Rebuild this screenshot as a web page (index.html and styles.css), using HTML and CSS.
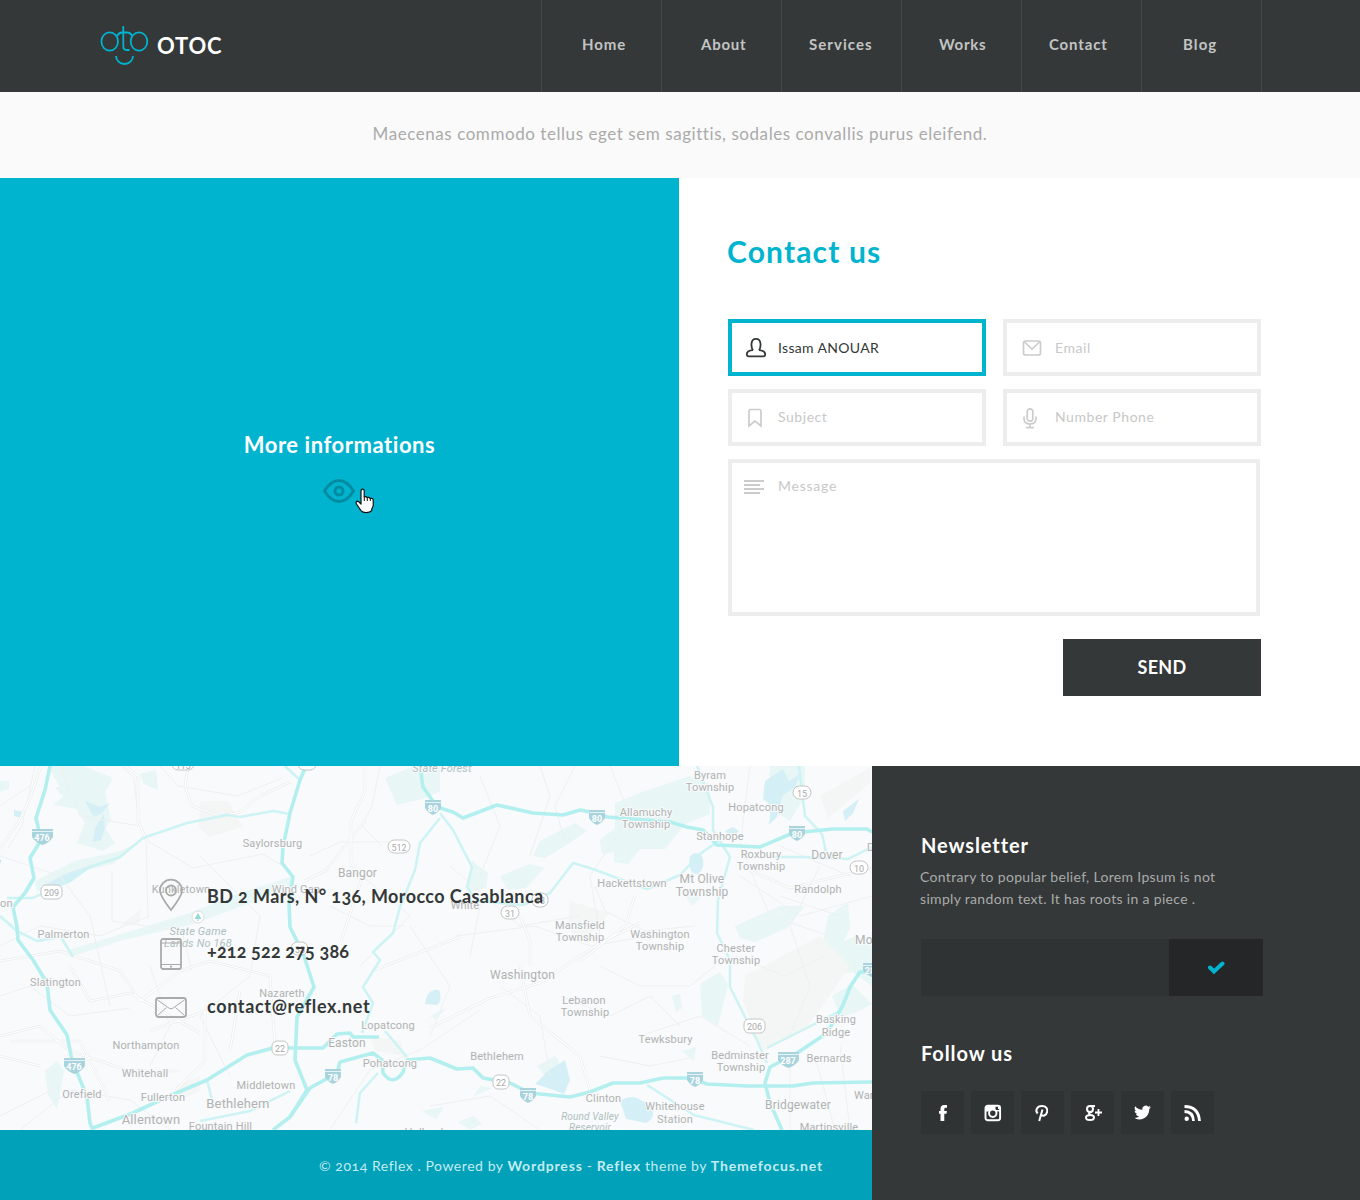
FILE: index.html
```html
<!DOCTYPE html>
<html lang="en">
<head>
<meta charset="utf-8">
<title>OTOC - Contact</title>
<link rel="stylesheet" href="styles.css">
</head>
<body>
<header class="header">
  <a class="logo">
    <svg class="logo-mark" width="50" height="42" viewBox="0 0 50 42" fill="none" stroke="#00b4cf" stroke-width="1.8">
      <ellipse cx="9.700" cy="16.500" rx="8.300" ry="9.200"/><ellipse cx="39" cy="16.500" rx="8.300" ry="9.200"/>
      <path d="M16.500 11.500Q19 7.500 22 7.500h5q3.500 0 5.500 4M23.300 1v20.500q0 3.500 3 3.500h3.200M16 31a8.500 8 0 0 0 17 0"/>
    </svg>
    <span class="logo-name">OTOC</span>
  </a>
  <nav class="nav">
    <a class="nav-item home">Home</a><a class="nav-item about">About</a><a class="nav-item services">Services</a><a class="nav-item works">Works</a><a class="nav-item reach">Contact</a><a class="nav-item blog">Blog</a>
  </nav>
</header>
<p class="tagline">Maecenas commodo tellus eget sem sagittis, sodales convallis purus eleifend.</p>

<main class="main">
  <section class="more">
    <h2 class="more-title">More informations</h2>
    <div class="eye">
      <svg width="34" height="26" viewBox="0 0 34 26" fill="none" stroke="#008ba1" stroke-width="3"><path d="M2.500 13Q9 2.500 17 2.500T31.500 13Q25 23.500 17 23.500T2.500 13z" stroke-linejoin="round"/><circle cx="17" cy="13" r="4"/></svg>
      <svg class="cursor" width="20" height="26" viewBox="0 0 20 26"><path d="M6 14V3q0-1.800 1.600-1.800T9.200 3v6q2-1 3 .6 2-.8 3 .8 2.800-.6 3 1.800v5.500l-1.500 3.500v1.500q-2 2-5.500 2-3.700 0-5.200-2L1.500 16q-1-2.200.5-2.800Q3.500 13 6 16z" fill="#fff" stroke="#111" stroke-width="1.200" stroke-linejoin="round"/><path d="M9.300 8.500V13M12.300 9.600V13M15.300 10.400V13" stroke="#111"/></svg>
    </div>
  </section>
  <section class="contact">
    <h1 class="contact-title">Contact us</h1>
    <form class="form">
      <div class="field active">
        <svg class="ico" width="22" height="22" viewBox="0 0 22 22" fill="none" stroke="#343838" stroke-width="1.800"><path d="M8 13.200C6.300 11 6.300 8 6.600 6 7 3 8.800 1.800 11 1.800S15 3 15.400 6c.3 2 .3 5-1.400 7.200M8 13.200c-3.500.3-6.200 1.200-6.200 4 0 1.600.8 2.100 2 2.100h14.400c1.200 0 2-.5 2-2.100 0-2.800-2.700-3.700-6.200-4"/></svg>
        <span class="name-text">Issam ANOUAR</span></div>
      <div class="field right">
        <svg class="ico" width="22" height="22" viewBox="0 0 22 22" fill="none" stroke="#ccc" stroke-width="1.700"><rect x="2.500" y="4" width="17" height="14" rx="2"/><path d="M3.500 5l7.500 7 7.500-7"/></svg>
        <span>Email</span></div>
      <div class="field low">
        <svg class="ico" width="22" height="22" viewBox="0 0 22 22" fill="none" stroke="#ccc" stroke-width="1.700"><path d="M4 19V4q0-1.500 1.500-1.500h9Q16 2.500 16 4v15l-6-5z"/></svg>
        <span>Subject</span></div>
      <div class="field right low">
        <svg class="ico" width="22" height="22" viewBox="0 0 22 22" fill="none" stroke="#ccc" stroke-width="1.700"><rect x="6.200" y="1.800" width="5.600" height="12.400" rx="2.800"/><path d="M3 9.500v2q0 5.500 6 5.500t6-5.500v-2M9 17v3.500M5 20.700h8"/></svg>
        <span>Number Phone</span></div>
      <div class="field message">
        <svg class="ico" width="22" height="22" viewBox="0 0 22 22" fill="none" stroke="#ccc" stroke-width="1.800"><path d="M0 5h20M0 9h16M0 13h20M0 17h16"/></svg>
        <span>Message</span></div>
      <button class="send" type="button">SEND</button>
    </form>
  </section>
</main>

<div class="bottom">
  <div class="left">
    <section class="map">
      <svg class="map-art" width="872" height="364" viewBox="0 0 872 364">
        <g class="park">
          <path d="M48 0h35l30 12-8 14 6 28-6 8 10 15-12 8-26-8 8-20-8-14-24-4 10-8-8-10H60z"/>
          <path d="M35 115l40-20 45-10 15-7-22 20-36 8-20 15-20 5zM65 185l60-18 65-20 50-20 53-17v10l-40 16-60 22-70 16-50 16z"/>
          <path d="M385 12l30-12h25v25l-18 8-25 6zM645 25l45-15 20 8v30l-25 10-20 25-25 0-12 15-14-2 0-10-12 2-2-14 15-12 0-25z"/>
          <path d="M540 75l35-18 12 8-22 15-20 12-12-2zM500 110l30-12 14 4-18 20-18 2zM472 95l16 12-2 15-18 4z"/>
          <path d="M770 0h35v30l-15 25-22-14zM735 160l45-20h25l-18 22-32 14-15-4zM700 218l20-12 8 12-10 42-16-10zM835 180l20-10 17 10v40l-20-14-18 4zM45 305l12-10 7 10-7 38-9-14zM537 300l18-10 10 14-14 14zM832 230l20-12 20 20-15 8-16 5z"/>
          <path d="M430 250l16-8-10 12zM422 345l22-4-8 12zM458 356l16-6 8 8-12 6zM682 285l14-4-2 14zM680 122l22 8-10 10zM828 150l20-14 2 26-14 30-14-10zM480 320l12 2-18 8zM0 15h9v8l-9 3zM140 8l16-4 2 20-14-6zM672 230l8-2 2 14-6 4z"/>
        </g>
        <g class="gray"><path d="M200 35h28l15 26-34 10-10-10zM135 148l6-6-2 16-20 2zM175 320l25-10v15l-22 10zM745 210l75-40 30 30-42 60-45 25-20-50zM370 270l30 5 5 15-30-5zM820 30l50-28v15l-42 35zM570 135l40 12-28 30-14-16z"/></g>
        <g class="water">
          <path d="M85 35l15 6 10-4-8 10-8 4zM95 62l9-14 1 14-4 12-8 2zM43 120l22-12 30-10-24 18-20 8zM765 15l18-12 6 12 12-8-6 14-12 8-6 22-8 8 2-20-8-6zM691 105q-5-16 4-18 10 0 8 14-5 12-12 4zM425 238q2-16 14-14 4 10-2 15zM535 318l14-14 10-6 6-4 5 20-6 14-16-6zM620 335q12-8 22 0l10 4q4 14-6 18l-20-4zM755 258l6-5 4 5-8 6zM843 45l16-12-6 14-8 8zM725 65l8-4 6 4-8 8zM14 44l9 2-2 6-7-2z"/>
        </g>
        <g class="thin">
          <path d="M35 0L22 60 8 82M122 0l12 12 4 40 8 20 2 80M160 0l18 20 60 10 44-18M143 72l50 30 70-14 20 12M0 180l40-20 60 10 50-20M112 105v50l70 10 10 40M0 230l30-10 40 30 60-8M0 40l30-20M380 0l-8 40-10 20 20 20M310 90l30-14 50 0M330 140l40 20 35 0M455 170l80-10 55 20 60-10M470 190l10-50 40-30M575 0l-20 40 10 35M595 120l10 25 40 20 50-5M600 200l40 20 50 0 25-20M740 110l60 40 72-20M560 230l50 20 40-20 30 30M735 190l50 20 40-20M430 340l60-10 50 34M600 290l50 10 40-8M790 290v74M815 290l20 74M840 280l10 84M450 100l70 60 60-10M500 220l40 30 10 60M410 160l40 60-20 50"/>
          <path d="M0 90l60 20 30 40 20 90M60 0l20 50 60 10M200 90l60 60-10 60-50 40 30 60M150 200l20 60-20 40M20 364l50-40 60 10 40 30M0 350l60-30M610 0l20 50-40 60 10 60M780 80l70 30M780 130l60 20M750 0l-10 80 30 70 60 20M330 364l40-60 50-20 60-40M350 100l60 50-50 50M480 10l20 50-20 50M540 0l10 30-20 60M820 100l-30 60 20 60-20 50M640 270l60-20 50 30"/>
        </g>
        <g class="minor">
          <path id="lanes" d="M41 0l-10 30-12 25-19 28M125 0l13 10v45l9 20M188 0l-3 20 7 20 28 10 20-4 20-16 30-14M0 195l60-10 60 20 20 30 40-30 30-10 40 10M365 0v25l-14 30 0 40 10 20-20 60M365 55l-40 50-20 10M372 205l90-35M430 262l60-30 50-15 60-40 40-20M530 200v-25l-10-25M520 200l10 50 50 40 10 35 10 4M740 100l50 22 82-20M635 130l-10 30-45 35M0 270l40-10 30 25 60 20 50 0M70 200l20 35 40-8 70 40M150 265l55-20 0 50-30 30M110 335l-30-60-70 0M40 300l-40-10M230 200l40 10 5 70M240 225l-10 60"/>
        </g>
        <use href="#lanes" class="lane-core"/>
        <g class="road">
          <path d="M7 132h26l37-18 20-13 30-10 23-19 44-15 40-8 13 2 33-6 17 3M440 52l-20 25-5 27-15 37-7 26-20 19 7 8-17 27 10 16-11 30M440 47l13 17 19 37-5 20 10 14 46 4 27-12 23-30 17 5 57 21 33-14 20-21 20-14M697 0l16 41v23l17 27-12 43-1 33 13 27v27l15 30 12 23 10 23M799 0l6 50 17 18 5 22M767 91h36l45 2 24-12M0 150l17 15 20 10 24-4 12 20M285 0l15 14M385 265l22 26M767 282l30-15 43-22M647 319l47 30 60 15M207 314l5 20M200 355l50-10 40-20M378 307l-18 20-4 30"/>
        </g>
        <g class="highway">
          <path d="M50 0l-5 24-9 28 5 22-11 18 4 20-9 15-12 14 4 20 1 13 15 20 14 23 3 27 17 25 5 25 15 37 3 26 3 7M306 0l-6 14-10 33-7 34-1 16 11 14-4 26 1 24 13 26 11 34-17 30-2 43 12 30-17 27-17 13M420 0l3 21 14 20 16 5 10 6 34-13 36 8 30 2 17-5 10 2 17 5 63 5 17 5 16 3 14 15 43 2 33-14 40-4h34l5 3"/>
          <path d="M93 362l40-15 34-16 40-17 40-25 26-7h50l14-14 13-1 3 4h26M290 351l20-29 27-15 3-11 33-9 9 7 1 13q10 14 20-1l4-12 23-2 27 11 16-1 10 10 27 5 20 10 40 4 20-5 23-9h27l23-5h27l17 6 40 2h46l20-3 59-1M872 206h-12l-10 15-7 18-16 28-30 20-27 14-5 16 5 20 12 27"/>
        </g>
        <g class="shield">
          <path d="M32 63h21v8q-4 6-10.500 8Q36 77 32 71zM425 34h16v8q-3 5-8 7-5-2-8-7zM589 44h16v8q-3 5-8 7-5-2-8-7zM789 60h16v8q-3 5-8 7-5-2-8-7zM64 292h21v8q-4 6-10.500 8Q68 306 64 300zM325 303h16v8q-3 5-8 7-5-2-8-7zM520 322h16v8q-3 5-8 7-5-2-8-7zM687 306h16v8q-3 5-8 7-5-2-8-7zM778 286h21v8q-4 6-10.500 8Q782 300 778 294zM863 197h9v14q-6-2-9-7z"/>
          <path class="shield-line" d="M32 65.500h21M425 36.500h16M589 46.500h16M789 62.500h16M64 294.500h21M325 305.500h16M520 324.500h16M687 308.500h16M778 288.500h21M863 199.500h9"/>
        </g>
        <g class="badge">
          <rect x="172" y="-9" width="22" height="13" rx="6"/><rect x="298" y="-9" width="18" height="13" rx="6"/>
          <rect x="41" y="119" width="21" height="14" rx="5"/><rect x="388" y="74" width="22" height="13" rx="6.500"/><rect x="793" y="20" width="18" height="13" rx="6.500"/><rect x="850" y="95" width="18" height="13" rx="6.500"/><rect x="501" y="140" width="18" height="13" rx="6.500"/><rect x="532" y="127" width="16" height="14" rx="6.500"/><rect x="272" y="275" width="16" height="14" rx="5"/><rect x="493" y="309" width="16" height="14" rx="5"/><rect x="744" y="253" width="21" height="14" rx="5"/><rect x="291" y="176" width="17" height="13" rx="6.500"/>
        </g>
        <circle cx="198" cy="151" r="6" fill="#fff" stroke="#ddd"/><path d="M198 147l3.500 6h-7zM197.500 152h1v3h-1z" fill="#9ad8d6"/>
        <g class="num">
          <text x="51.500" y="130">209</text><text x="399" y="85">512</text><text x="802" y="31">15</text><text x="859" y="106">10</text><text x="510" y="151">31</text><text x="540" y="138">33</text><text x="280" y="286">22</text><text x="501" y="320">22</text><text x="754.500" y="264">206</text><text x="300" y="187">33</text><text x="183" y="3">115</text>
        </g>
        <g class="inter">
          <text x="42" y="74.500">476</text><text x="433" y="45.500">80</text><text x="597" y="55.500">80</text><text x="797" y="71.500">80</text><text x="74" y="303.500">476</text><text x="333" y="314.500">78</text><text x="528" y="333.500">78</text><text x="695" y="317.500">78</text><text x="788" y="297.500">287</text><text x="870" y="208">28</text>
        </g>
        <g class="place">
          <text x="272.500" y="81">Saylorsburg</text><text x="357.500" y="111" class="mid">Bangor</text><text x="181" y="127">Kunkletown</text><text x="296" y="127">Wind Gap</text><text x="465" y="143">White</text><text x="63.500" y="172">Palmerton</text><text x="55.500" y="220">Slatington</text><text x="282" y="231">Nazareth</text><text x="388" y="263">Lopatcong</text><text x="347" y="281" class="mid">Easton</text><text x="390" y="301">Pohatcong</text><text x="146" y="283">Northampton</text><text x="145" y="311">Whitehall</text><text x="82" y="332">Orefield</text><text x="163" y="335">Fullerton</text><text x="266" y="323">Middletown</text><text x="238" y="342" class="big">Bethlehem</text><text x="151" y="358" class="big">Allentown</text><text x="220.500" y="364">Fountain Hill</text><text x="497" y="294">Bethlehem</text><text x="522.500" y="213" class="mid">Washington</text>
          <text x="710" y="13">Byram</text><text x="710" y="25">Township</text><text x="756" y="45">Hopatcong</text><text x="646" y="50">Allamuchy</text><text x="646" y="62">Township</text><text x="720" y="74">Stanhope</text><text x="761" y="92">Roxbury</text><text x="761" y="104">Township</text><text x="827" y="93" class="mid">Dover</text><text x="632" y="121">Hackettstown</text><text x="702" y="117" class="mid">Mt Olive</text><text x="702" y="130" class="mid">Township</text><text x="818" y="127">Randolph</text><text x="580" y="163">Mansfield</text><text x="580" y="175">Township</text><text x="660" y="172">Washington</text><text x="660" y="184">Township</text><text x="736" y="186">Chester</text><text x="736" y="198">Township</text><text x="584" y="238">Lebanon</text><text x="585" y="250">Township</text><text x="665.500" y="277">Tewksbury</text><text x="740" y="293">Bedminster</text><text x="741" y="305">Township</text><text x="836" y="257">Basking</text><text x="836" y="270">Ridge</text><text x="829" y="296">Bernards</text><text x="603.500" y="336">Clinton</text><text x="675" y="344">Whitehouse</text><text x="675" y="357">Station</text><text x="798" y="343" class="mid">Bridgewater</text><text x="829" y="365">Martinsville</text><text x="424" y="370">Holland</text>
          <g class="edge"><text x="855" y="178" class="mid">Mo</text><text x="854" y="333">War</text><text x="867" y="85">D</text><text x="0" y="141">on</text><text x="-5" y="99">e</text></g>
          <g class="ital"><text x="198" y="169">State Game</text><text x="198" y="181">Lands No 168</text><text x="442" y="6">State Forest</text><text x="590" y="354" class="valley">Round Valley</text><text x="590" y="365" class="valley">Reservoir</text></g>
        </g>
      </svg>
      <ul class="details">
        <li class="detail address"><svg width="32" height="34" viewBox="0 0 32 34" fill="none" stroke="#aaa" stroke-width="1.800"><path d="M16 32Q5 18 5 12.500a11 10.800 0 0 1 22 0Q27 18 16 32z"/><circle cx="16" cy="12.500" r="5"/></svg><span>BD 2 Mars, N° 136, Morocco Casablanca</span></li>
        <li class="detail phone"><svg width="32" height="34" viewBox="0 0 32 34" fill="none" stroke="#aaa" stroke-width="1.800"><rect x="6" y="2" width="20" height="30" rx="2"/><path d="M6 6h20M6 27.500h20" stroke-width="1"/><path d="M15 29.700h2"/></svg><span>+212 522 275 386</span></li>
        <li class="detail mail"><svg width="32" height="34" viewBox="0 0 32 34" fill="none" stroke="#aaa" stroke-width="1.800"><rect x="1" y="7" width="30" height="19" rx="2.500"/><path d="M2.500 9l10 7q3.500 3.500 7 0l10-7M2.500 24.500l9-8M29.500 24.500l-9-8" stroke-width="1"/></svg><span>contact@reflex.net</span></li>
      </ul>
    </section>
    <footer class="footer">© 2014 Reflex . Powered by <b>Wordpress</b> - <b>Reflex</b> theme by <b>Themefocus.net</b></footer>
  </div>
  <aside class="side">
    <h3 class="side-title">Newsletter</h3>
    <p class="side-text">Contrary to popular belief, Lorem Ipsum is not<br>simply random text. It has roots in a piece .</p>
    <div class="subscribe"><div class="subscribe-input"></div><button class="subscribe-btn" type="button"><svg width="18" height="14" viewBox="0 0 18 14" fill="none" stroke="#00b4cf" stroke-width="4" stroke-linecap="round"><path d="M3 6.500L7 10.500 15.500 2.500"/></svg></button></div>
    <h3 class="side-title follow">Follow us</h3>
    <div class="social">
      <a><svg width="18" height="18" viewBox="0 0 18 18" fill="#fff"><path d="M6.500 17V9.700H5V7h1.500V5q0-4 3.700-4H13v2.800h-1.500q-1.200 0-1.200 1.200v2h2.600l-.4 2.700h-2.200V17z"/></svg></a>
      <a><svg width="18" height="18" viewBox="0 0 18 18" fill="none" stroke="#fff"><rect x="1.500" y="1.700" width="14.600" height="14.600" rx="2.200" stroke-width="1.900"/><path d="M2 6.800h4M12 6.800h4" stroke-width="1.600"/><path d="M2 4h9.500" stroke-width="4"/><path d="M14.800 2v3" stroke-width="1.600"/><circle cx="8.800" cy="9.200" r="3.700" fill="#2f3333" stroke-width="2"/></svg></a>
      <a><svg width="18" height="18" viewBox="0 0 18 18" fill="none" stroke="#fff" stroke-width="2"><path d="M3.700 9.500C.8 6.500 3 2 7.800 2 12.500 2 13.800 5 13.100 8c-.8 4-4.800 4.500-5.600 2.500M8.500 5.500L5.200 17"/></svg></a>
      <a><svg width="18" height="18" viewBox="0 0 18 18" fill="none" stroke="#fff" stroke-width="2"><circle cx="6" cy="5" r="3"/><path d="M6 2h5M8 8q-3 0-3 1.500 0 1 2 1.500 3 .5 3 2.500Q10 16 6 16t-4-2.500Q2 11 6.500 11"/><path d="M11 8.500h7M14.500 5v7" stroke-width="1.800"/></svg></a>
      <a><svg width="17" height="17" viewBox="0 0 24 24" fill="#fff"><path d="M23.950 4.570a10 10 0 0 1-2.820.77 4.960 4.960 0 0 0 2.160-2.720c-.95.550-2 .95-3.130 1.180a4.920 4.920 0 0 0-8.380 4.480C7.690 8.100 4.070 6.130 1.640 3.160a4.820 4.820 0 0 0-.67 2.480c0 1.710.87 3.210 2.190 4.100a4.900 4.900 0 0 1-2.230-.62v.06a4.920 4.920 0 0 0 3.950 4.830 5 5 0 0 1-2.210.08 4.940 4.940 0 0 0 4.600 3.420A9.870 9.870 0 0 1 0 19.540a14 14 0 0 0 7.550 2.210c9.050 0 14-7.500 14-13.980 0-.21 0-.42-.02-.63a9.940 9.940 0 0 0 2.420-2.570z"/></svg></a>
      <a><svg width="18" height="18" viewBox="0 0 18 18" fill="none" stroke="#fff" stroke-width="2.800"><path d="M.5 7.500q8.500 0 9 9.500M.5 2.500Q14.500 2.500 15.500 17"/><circle cx="2.700" cy="14.800" r="2.200" fill="#fff" stroke="none"/></svg></a>
    </div>
  </aside>
</div>
</body>
</html>
```
FILE: styles.css
```css
* { box-sizing: border-box; }
body { margin: 0; width: 1360px; height: 1200px; overflow: hidden; background: #fff; font-family: Lato, "Open Sans", sans-serif; font-variant-numeric: oldstyle-nums; color: #343838; }
h1, h2, h3, p, ul { margin: 0; padding: 0; }
svg { display: block; flex: none; }

.header { display: flex; height: 92px; background: #343838; }
.logo { display: flex; width: 541px; padding: 25px 0 0 100px; }
.logo-name { margin: 7px 0 0 7px; font-size: 22px; line-height: 28px; font-weight: 700; letter-spacing: .8px; color: #fff; }
.nav { display: flex; border-right: 1px solid #454949; }
.nav-item { width: 120px; border-left: 1px solid #454949; line-height: 89px; font-size: 15px; font-weight: 700; color: #c3c4c4; white-space: nowrap; }
.home { padding-left: 40px; letter-spacing: .9px; }
.about { padding-left: 39px; letter-spacing: .75px; }
.services { padding-left: 27px; letter-spacing: 1.05px; }
.works { padding-left: 37px; letter-spacing: .75px; }
.reach { padding-left: 27px; letter-spacing: .85px; }
.blog { padding-left: 41px; letter-spacing: 1.1px; }

.tagline { height: 86px; background: #fafafa; text-align: center; line-height: 84px; font-size: 17px; letter-spacing: .56px; color: #aaa; }

.main { display: grid; grid-template-columns: 679px 681px; height: 588px; }
.more { display: flex; flex-direction: column; align-items: center; padding-top: 253px; background: #00b4cf; }
.more-title { font-size: 22px; line-height: 28px; font-weight: 700; letter-spacing: .55px; color: #fff; }
.eye { position: relative; margin: 19px 2px 0 0; }
.cursor { position: absolute; left: 33px; top: 10px; }

.contact { padding: 53px 99px 0 49px; }
.contact-title { font-size: 30px; line-height: 40px; font-weight: 700; letter-spacing: 1.15px; color: #00b4cf; margin-left: -1px; }
.form { display: grid; grid-template-columns: 258px 258px; column-gap: 17px; row-gap: 13px; margin-top: 48px; }
.field { display: flex; align-items: center; height: 57px; border: 4px solid #ededed; padding-left: 13px; font-size: 14px; line-height: 20px; letter-spacing: .55px; color: #c8c8c8; }
.field .ico { margin-right: 11px; }
.field.active { border-color: #00b4cf; color: #343838; }
.name-text { letter-spacing: .33px; }
.field.right .ico { margin: 0 12px 0 1px; }
.field.low span { margin-top: -2px; }
.field.message { grid-column: 1 / 3; width: 532px; height: 157px; align-items: flex-start; padding: 13px 0 0 12px; letter-spacing: .75px; }
.field.message .ico { margin-right: 12px; }
.send { grid-column: 2; width: 198px; height: 57px; margin-top: 10px; padding: 0 0 1px; justify-self: end; border: 0; background: #343838; color: #fff; font: 700 18px/56px Lato, sans-serif; letter-spacing: .3px; }

.bottom { display: grid; grid-template-columns: 872px 488px; height: 434px; }
.map { display: grid; height: 364px; background: #f8fafb; }
.map-art, .details { grid-area: 1 / 1; }
.details { list-style: none; padding: 112px 0 0 155px; }
.detail { display: flex; height: 55px; font-size: 18px; line-height: 37px; font-weight: 700; white-space: nowrap; }
.detail svg { margin-right: 20px; }
.address { letter-spacing: .39px; }
.phone { letter-spacing: .17px; line-height: 36px; }
.mail { letter-spacing: .65px; }
.phone svg { margin-top: 4px; }
.mail svg { margin-top: 3px; }
.footer { height: 70px; background: #00a1b9; padding-right: 49px; text-align: right; line-height: 72px; font-size: 14px; letter-spacing: .55px; white-space: nowrap; color: #c4ecf1; }
.footer b { letter-spacing: .85px; }

.park { fill: #e8f6f5; }
.gray { fill: #f4f5f5; }
.water { fill: #d5eff7; }
.thin, .minor, .road, .highway, .lane-core { fill: none; stroke-linejoin: round; }
.thin { stroke: #eff1f1; stroke-width: 1; }
.minor { stroke: #ebeded; stroke-width: 2.600px; }
.lane-core { stroke: #fff; stroke-width: 1.200px; }
.road { stroke: #cdf3f4; stroke-width: 2.500px; }
.highway { stroke: #b3efef; stroke-width: 3.600px; }
.shield { fill: #a9d3dd; }
.shield-line { stroke: #e6f3f6; stroke-width: 1; }
.badge { fill: #fff; stroke: #c4c6c6; }
.num, .inter, .place { font-family: Roboto, sans-serif; text-anchor: middle; font-variant-numeric: normal; }
.num { font-size: 9px; fill: #aaa; }
.inter { font-size: 9px; font-weight: 700; fill: #fff; }
.place { font-size: 11px; letter-spacing: .15px; fill: #b0b2b2; paint-order: stroke; stroke: #f8fafb; stroke-width: 2px; }
.mid { font-size: 12px; }
.big { font-size: 13px; }
.edge { text-anchor: start; }
.ital { font-style: italic; fill: #b0c0c0; }
.valley { font-size: 10px; }

.side { padding: 65px 97px 0 49px; background: #343838; }
.side-title { font-size: 20px; line-height: 28px; font-weight: 700; letter-spacing: .9px; color: #fff; }
.side-text { margin: 7px 0 0 -1px; font-size: 14px; line-height: 22px; letter-spacing: .32px; white-space: nowrap; color: #a9abab; }
.subscribe { display: flex; margin-top: 29px; height: 57px; width: 342px; }
.subscribe-input { width: 248px; background: #2f3333; }
.subscribe-btn { display: flex; align-items: center; justify-content: center; width: 94px; border: 0; padding: 0; background: #252628; }
.follow { margin-top: 43px; }
.social { display: flex; gap: 7px; margin-top: 24px; }
.social a { display: flex; align-items: center; justify-content: center; width: 43px; height: 43px; background: #2f3333; }
```
